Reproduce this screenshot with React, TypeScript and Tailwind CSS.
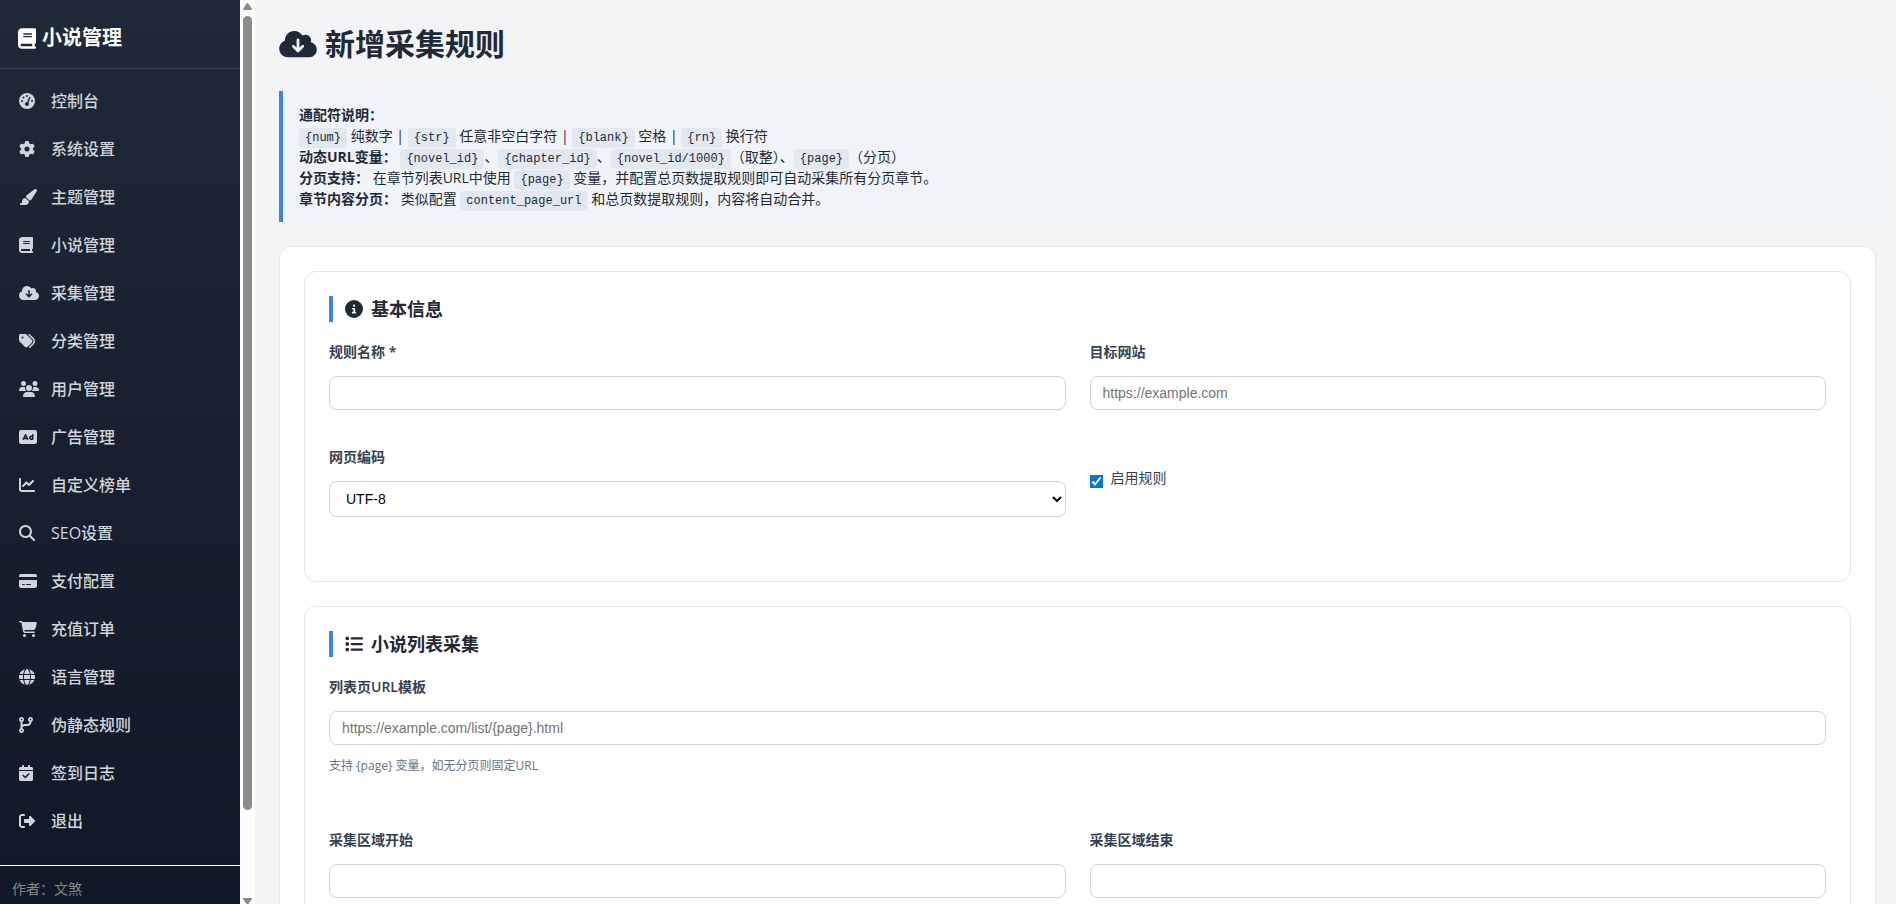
import * as React from 'react'
import type {IconType} from 'react-icons'
import {
  FaBook,
  FaCalendarCheck,
  FaCartShopping,
  FaChartLine,
  FaCheck,
  FaCircleInfo,
  FaCloudArrowDown,
  FaCodeBranch,
  FaCreditCard,
  FaGaugeHigh,
  FaGear,
  FaGlobe,
  FaList,
  FaMagnifyingGlass,
  FaPaintbrush,
  FaRectangleAd,
  FaRightFromBracket,
  FaTags,
  FaUsers,
} from 'react-icons/fa6'

// size keeps each glyph at its own aspect ratio
const navItems: Array<{label: string; icon: IconType; size: string}> = [
  {label: '控制台', icon: FaGaugeHigh, size: 'h-4 w-4'},
  {label: '系统设置', icon: FaGear, size: 'h-4 w-4'},
  {label: '主题管理', icon: FaPaintbrush, size: 'h-4 w-[18px]'},
  {label: '小说管理', icon: FaBook, size: 'h-4 w-3.5'},
  {label: '采集管理', icon: FaCloudArrowDown, size: 'h-4 w-5'},
  {label: '分类管理', icon: FaTags, size: 'h-4 w-4'},
  {label: '用户管理', icon: FaUsers, size: 'h-4 w-5'},
  {label: '广告管理', icon: FaRectangleAd, size: 'h-4 w-[18px]'},
  {label: '自定义榜单', icon: FaChartLine, size: 'h-4 w-4'},
  {label: 'SEO设置', icon: FaMagnifyingGlass, size: 'h-4 w-4'},
  {label: '支付配置', icon: FaCreditCard, size: 'h-4 w-[18px]'},
  {label: '充值订单', icon: FaCartShopping, size: 'h-4 w-[18px]'},
  {label: '语言管理', icon: FaGlobe, size: 'h-4 w-4'},
  {label: '伪静态规则', icon: FaCodeBranch, size: 'h-4 w-3.5'},
  {label: '签到日志', icon: FaCalendarCheck, size: 'h-4 w-3.5'},
  {label: '退出', icon: FaRightFromBracket, size: 'h-4 w-4'},
]

function Sidebar() {
  return (
    <aside className="flex w-60 shrink-0 flex-col bg-linear-to-b from-[#1f2937] to-[#111827] text-[#d1d5db]">
      <div className="flex h-[69px] shrink-0 items-center gap-1.5 border-b border-white/10 pl-[18px] pt-2 text-[20px] font-bold text-white">
        <FaBook className="h-[21px] w-[18px]" />
        小说管理
      </div>
      <nav className="mt-2 flex flex-col">
        {navItems.map(({label, icon: Icon, size}) => (
          <a
            key={label}
            href="#"
            className="flex h-12 items-center pl-[19px] text-base font-medium"
          >
            <span className="mr-3 w-5">
              <Icon className={size} />
            </span>
            {label}
          </a>
        ))}
      </nav>
      <div className="mt-5 border-t border-white px-3 py-[11px] text-sm leading-6 text-[#888888]">
        作者：文煞
      </div>
    </aside>
  )
}

function Scrollbar() {
  return (
    <div className="flex w-[15px] shrink-0 flex-col items-center bg-[#fcfcfc] pt-[3px]">
      <svg className="h-[7px] w-[9px] shrink-0 fill-[#8b8b8b]" viewBox="0 0 9 7">
        <path d="M4.5 0Q5 0 5.4.6L9 6Q9 7 8 7H1Q0 7 0 6L3.6.6Q4 0 4.5 0Z" />
      </svg>
      <div className="mt-1.5 min-h-0 w-[9px] flex-1">
        <div className="h-[90%] rounded-full bg-[#8b8b8b]" />
      </div>
      <svg className="h-[6px] w-[9px] shrink-0 fill-[#8b8b8b]" viewBox="0 0 9 6">
        <path d="M0 0H9V1L5.5 6H3.5L0 1Z" />
      </svg>
    </div>
  )
}

function Code({children}: {children: React.ReactNode}) {
  return (
    <code className="rounded bg-[#e2e8f0] px-1.5 py-[3px] font-['Liberation_Mono',monospace] text-xs">
      {children}
    </code>
  )
}

function Notice() {
  return (
    <div className="mb-6 border-l-4 border-[#3b82f6] bg-[#f0f4f9] px-4 py-[13px] text-sm leading-[21px]">
      <p>
        <strong>通配符说明：</strong>
      </p>
      <p>
        <Code>{'{num}'}</Code> 纯数字 | <Code>{'{str}'}</Code> 任意非空白字符 |{' '}
        <Code>{'{blank}'}</Code> 空格 | <Code>{'{rn}'}</Code> 换行符
      </p>
      <p>
        <strong>动态URL变量：</strong> <Code>{'{novel_id}'}</Code>、
        <Code>{'{chapter_id}'}</Code>、<Code>{'{novel_id/1000}'}</Code>
        （取整）、
        <Code>{'{page}'}</Code>（分页）
      </p>
      <p>
        <strong>分页支持：</strong> 在章节列表URL中使用 <Code>{'{page}'}</Code>{' '}
        变量，并配置总页数提取规则即可自动采集所有分页章节。
      </p>
      <p>
        <strong>章节内容分页：</strong> 类似配置 <Code>content_page_url</Code>{' '}
        和总页数提取规则，内容将自动合并。
      </p>
    </div>
  )
}

interface SectionProps {
  title: string
  icon: IconType
  children: React.ReactNode
}

function Section({title, icon: Icon, children}: SectionProps) {
  return (
    <section className="rounded-xl border border-[#e2e8f0] p-6">
      <h2 className="mb-5 flex h-[26px] items-center gap-2 border-l-4 border-[#3b82f6] pl-3 text-lg font-bold">
        <Icon className="h-[18px] w-[18px]" />
        {title}
      </h2>
      {children}
    </section>
  )
}

interface FieldProps {
  id: string
  label: string
  hint?: string
  children: React.ReactNode
}

function Field({id, label, hint, children}: FieldProps) {
  return (
    <div className="pb-5">
      <label
        htmlFor={id}
        className="mb-3.5 block text-sm font-semibold leading-5 text-[#334155]"
      >
        {label}
      </label>
      {children}
      {hint ? (
        <p className="mt-3 text-xs leading-[18px] text-[#64748b]">{hint}</p>
      ) : null}
    </div>
  )
}

function TextInput({id, placeholder}: {id: string; placeholder?: string}) {
  return (
    <input
      id={id}
      type="text"
      placeholder={placeholder}
      className="block h-[34px] w-full rounded-lg border border-[#cbd5e1] bg-white px-3 font-['Liberation_Sans',sans-serif] text-sm text-black placeholder:text-[#757575]"
    />
  )
}

function RuleForm() {
  return (
    <form className="flex flex-col gap-6 rounded-xl border border-[#e5e7eb] bg-white p-6">
      <Section title="基本信息" icon={FaCircleInfo}>
        <div className="mb-5 grid grid-cols-2 gap-x-6 gap-y-[17px]">
          <Field id="name" label="规则名称 *">
            <TextInput id="name" />
          </Field>
          <Field id="site" label="目标网站">
            <TextInput id="site" placeholder="https://example.com" />
          </Field>
          <Field id="charset" label="网页编码">
            <select
              id="charset"
              className="block h-9 w-full rounded-lg border border-[#cbd5e1] bg-white px-3 font-['Liberation_Sans',sans-serif] text-sm text-black"
            >
              <option>UTF-8</option>
              <option>GBK</option>
            </select>
          </Field>
          <div className="pt-[21px]">
            <label className="flex items-end gap-2 text-sm leading-5 text-[#334155]">
              <span className="relative h-[13px] w-[13px]">
                <input
                  type="checkbox"
                  defaultChecked
                  className="peer block h-[13px] w-[13px] appearance-none border border-[#767676] bg-white checked:border-[#0078d7] checked:bg-[#0078d7]"
                />
                <svg
                  className="pointer-events-none absolute inset-0 hidden h-[13px] w-[13px] fill-none stroke-white stroke-2 peer-checked:block"
                  viewBox="0 0 13 13"
                >
                  <path d="M2.5 6.5L5 9.5L10.5 2.5" />
                </svg>
              </span>
              启用规则
            </label>
          </div>
        </div>
      </Section>

      <Section title="小说列表采集" icon={FaList}>
        <div className="mb-[35px]">
          <Field
            id="list-url"
            label="列表页URL模板"
            hint="支持 {page} 变量，如无分页则固定URL"
          >
            <TextInput
              id="list-url"
              placeholder="https://example.com/list/{page}.html"
            />
          </Field>
        </div>
        <div className="mb-5 grid grid-cols-2 gap-x-6 gap-y-[17px]">
          <Field id="area-start" label="采集区域开始">
            <TextInput id="area-start" />
          </Field>
          <Field id="area-end" label="采集区域结束">
            <TextInput id="area-end" />
          </Field>
        </div>
      </Section>
    </form>
  )
}

export default function App() {
  return (
    <div className="flex h-screen overflow-hidden bg-[#f3f4f6] font-['Open_Sans','Noto_Sans_CJK_SC',sans-serif] text-[#1f2937]">
      <Sidebar />
      <Scrollbar />
      <main className="min-w-0 flex-1 overflow-hidden pl-6 pr-5 pt-[22px]">
        <h1 className="mb-[26px] flex items-center gap-2 text-3xl/[43px] font-bold">
          <FaCloudArrowDown className="h-[30px] w-[38px]" />
          新增采集规则
        </h1>
        <Notice />
        <RuleForm />
      </main>
    </div>
  )
}
